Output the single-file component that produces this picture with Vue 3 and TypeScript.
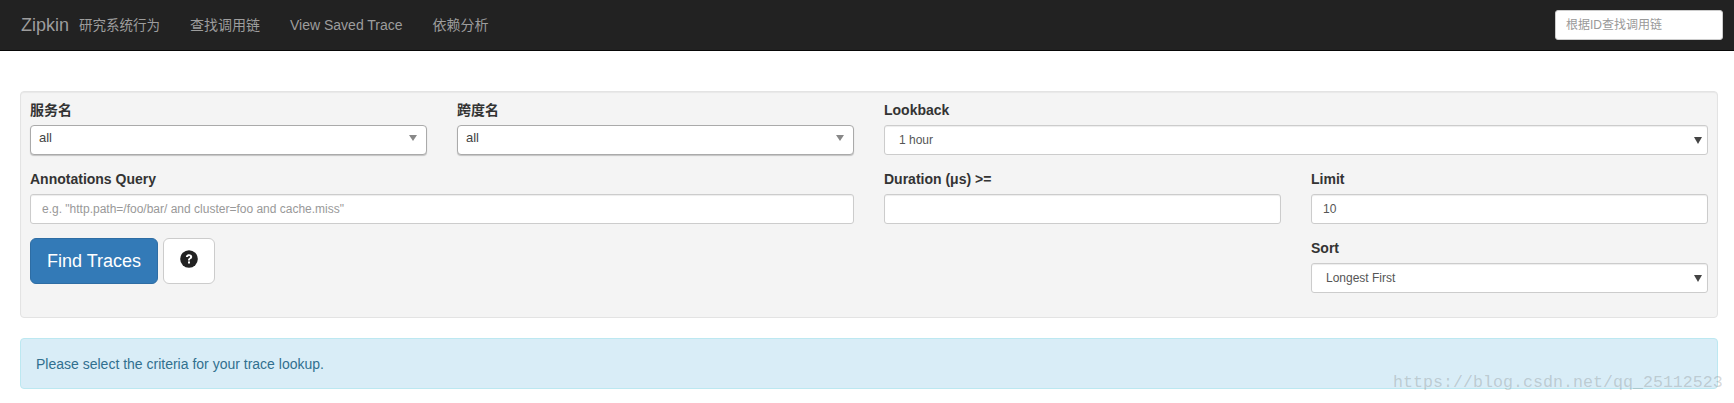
<script setup lang="ts">
const navLinks: string[] = ['查找调用链', 'View Saved Trace', '依赖分析']
</script>

<template>
  <div class="page">
    <nav class="navbar">
      <a class="brand">Zipkin</a>
      <span class="tagline">研究系统行为</span>
      <ul class="nav">
        <li v-for="link in navLinks" :key="link">{{ link }}</li>
      </ul>
      <input class="trace-search" type="text" placeholder="根据ID查找调用链" />
    </nav>

    <main class="content">
      <form class="well" @submit.prevent>
        <div class="field">
          <label>服务名</label>
          <div class="combo">
            <span>all</span>
            <i class="combo-arrow"></i>
          </div>
        </div>
        <div class="field">
          <label>跨度名</label>
          <div class="combo">
            <span>all</span>
            <i class="combo-arrow"></i>
          </div>
        </div>
        <div class="field span-2">
          <label>Lookback</label>
          <div class="select-wrap">
            <select class="control select">
              <option>1 hour</option>
            </select>
            <i class="select-arrow"></i>
          </div>
        </div>

        <div class="field span-2">
          <label>Annotations Query</label>
          <input
            class="control"
            type="text"
            placeholder='e.g. "http.path=/foo/bar/ and cluster=foo and cache.miss"'
          />
        </div>
        <div class="field">
          <label>Duration (μs) &gt;=</label>
          <input class="control" type="text" />
        </div>
        <div class="field">
          <label>Limit</label>
          <input class="control" type="text" value="10" />
        </div>

        <div class="actions span-3">
          <button class="btn btn-primary" type="submit">Find Traces</button>
          <button class="btn btn-help" type="button" aria-label="Help">
            <svg width="18" height="18" viewBox="0 0 18 18">
              <circle cx="9" cy="9" r="8.8" fill="#222" />
              <path
                d="M5.9 6.9C6 5.2 7.3 4.2 9.1 4.2c1.8 0 3.1 1.1 3.1 2.6 0 1.2-.7 1.8-1.5 2.3-.6.4-.8.6-.8 1.3H8c0-1.3.4-1.9 1.2-2.4.6-.4.9-.7.9-1.1 0-.5-.4-.8-1-.8-.7 0-1.1.4-1.2 1z"
                fill="#fff"
              />
              <rect x="8" y="11.4" width="2" height="2.1" fill="#fff" />
            </svg>
          </button>
        </div>
        <div class="field">
          <label>Sort</label>
          <div class="select-wrap">
            <select class="control select">
              <option>Longest First</option>
            </select>
            <i class="select-arrow"></i>
          </div>
        </div>
      </form>

      <div class="alert">Please select the criteria for your trace lookup.</div>
    </main>

    <div class="watermark">https://blog.csdn.net/qq_25112523</div>
  </div>
</template>

<style>
html,
body {
  margin: 0;
  background: #fff;
}
</style>

<style scoped>
.page {
  position: relative;
  width: 1734px;
  height: 403px;
  overflow: hidden;
  font-family: 'Liberation Sans', Arial, 'Noto Sans CJK SC', sans-serif;
  font-size: 14px;
  line-height: 20px;
  color: #333;
}

.navbar {
  display: flex;
  align-items: center;
  box-sizing: border-box;
  height: 51px;
  padding: 0 11px 1px 21px;
  background: #222;
  border-bottom: 1px solid #080808;
  color: #9d9d9d;
}

.brand {
  font-size: 18px;
  margin-right: 10px;
}

.tagline {
  font-size: 13.5px;
  padding-top: 3px;
}

.nav {
  display: flex;
  gap: 30px;
  list-style: none;
  margin: 0 0 0 30px;
  padding: 0;
}

.trace-search {
  box-sizing: border-box;
  width: 168px;
  height: 30px;
  margin-left: auto;
  padding: 0 10px;
  border: 1px solid #ccc;
  border-radius: 3px;
  background: #fff;
  font: inherit;
  font-size: 12px;
  outline: none;
}

.trace-search::placeholder,
.control::placeholder {
  color: #999;
  opacity: 1;
}

.content {
  padding: 40px 16px 0 20px;
}

.well {
  display: grid;
  grid-template-columns: repeat(4, 397px);
  column-gap: 30px;
  row-gap: 14px;
  box-sizing: border-box;
  height: 227px;
  padding: 8px 9px 0;
  background: #f4f4f4;
  border: 1px solid #e3e3e3;
  border-radius: 4px;
  box-shadow: inset 0 1px 1px rgba(0, 0, 0, 0.05);
  align-content: start;
}

.span-2 {
  grid-column: span 2;
}

.span-3 {
  grid-column: span 3;
}

label {
  display: block;
  margin-bottom: 5px;
  font-weight: 700;
  color: #333;
}

.control {
  display: block;
  box-sizing: border-box;
  width: 100%;
  height: 30px;
  padding: 0 11px;
  border: 1px solid #ccc;
  border-radius: 3px;
  background: #fff;
  font: inherit;
  font-size: 12px;
  color: #555;
  outline: none;
  box-shadow: inset 0 1px 1px rgba(0, 0, 0, 0.075);
}

.select-wrap {
  position: relative;
}

.select {
  appearance: none;
  padding-left: 14px;
}

.select-arrow {
  position: absolute;
  top: 12px;
  right: 6px;
  width: 0;
  height: 0;
  border-left: 4px solid transparent;
  border-right: 4px solid transparent;
  border-top: 7px solid #444;
}

.combo {
  display: flex;
  align-items: center;
  justify-content: space-between;
  box-sizing: border-box;
  height: 30px;
  padding: 0 9px 5px 8px;
  background: #fff;
  border: 1px solid #aaa;
  border-radius: 4px;
  box-shadow: 0 1px 1px rgba(0, 0, 0, 0.2);
  font-size: 13px;
  color: #444;
}

.combo-arrow {
  width: 0;
  height: 0;
  border-left: 4px solid transparent;
  border-right: 4px solid transparent;
  border-top: 6px solid #888;
}

.actions {
  display: flex;
  align-items: flex-start;
  gap: 5px;
}

.btn {
  box-sizing: border-box;
  height: 46px;
  border-radius: 6px;
  font: inherit;
  font-size: 18px;
  cursor: pointer;
}

.btn-primary {
  width: 128px;
  background: #337ab7;
  border: 1px solid #2e6da4;
  color: #fff;
}

.btn-help {
  display: flex;
  align-items: center;
  justify-content: center;
  width: 52px;
  padding: 0 0 4px;
  background: #fff;
  border: 1px solid #ccc;
}

.alert {
  box-sizing: border-box;
  height: 51px;
  margin-top: 20px;
  padding: 15px;
  background: #d9edf7;
  border: 1px solid #bce8f1;
  border-radius: 4px;
  color: #31708f;
}

.watermark {
  position: absolute;
  top: 373px;
  left: 1393px;
  font-family: 'Liberation Mono', monospace;
  font-size: 16.67px;
  line-height: 20px;
  color: rgba(120, 120, 120, 0.3);
  white-space: nowrap;
  pointer-events: none;
}
</style>
